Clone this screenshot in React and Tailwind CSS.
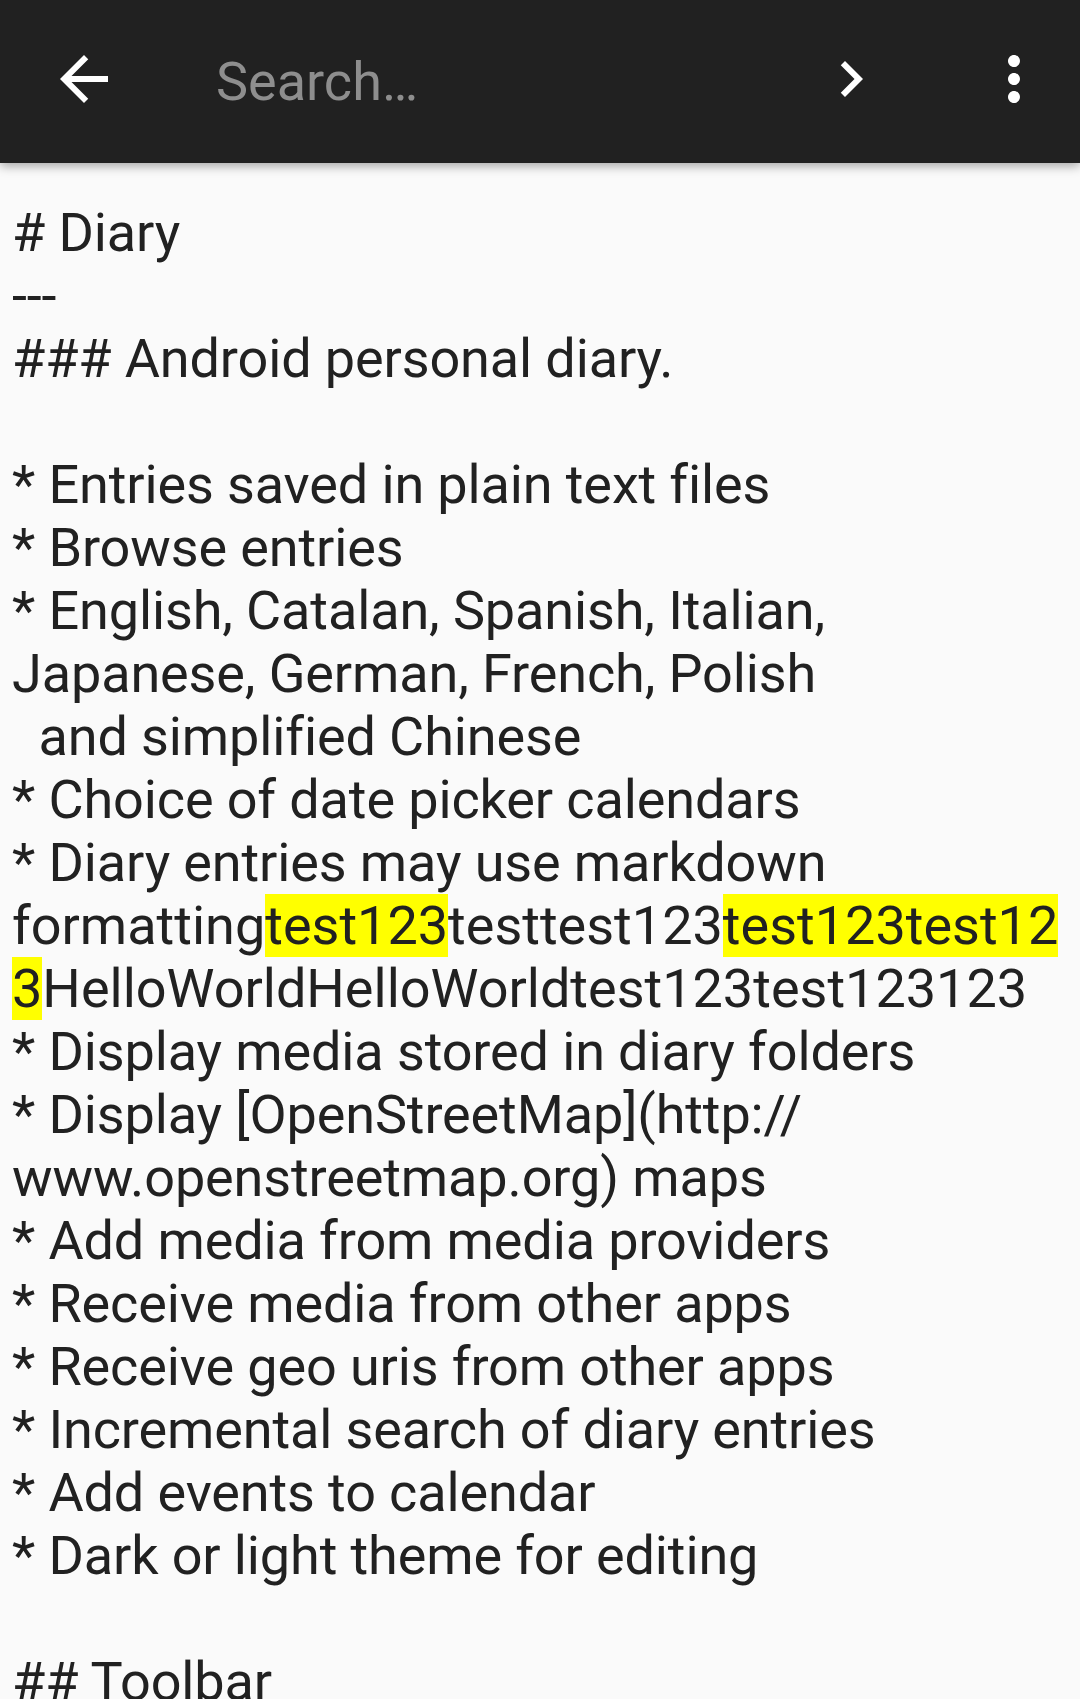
import React from 'react'

const lines = [
  '# Diary',
  '---',
  '### Android personal diary.',
  '',
  '* Entries saved in plain text files',
  '* Browse entries',
  '* English, Catalan, Spanish, Italian,',
  'Japanese, German, French, Polish',
  '  and simplified Chinese',
  '* Choice of date picker calendars',
  '* Diary entries may use markdown',
  'HL1',
  'HL2',
  '* Display media stored in diary folders',
  '* Display [OpenStreetMap](http://',
  'www.openstreetmap.org) maps',
  '* Add media from media providers',
  '* Receive media from other apps',
  '* Receive geo uris from other apps',
  '* Incremental search of diary entries',
  '* Add events to calendar',
  '* Dark or light theme for editing',
  '',
  '## Toolbar',
]

function Mark({ children }) {
  return <span className="bg-[#ffff00]">{children}</span>
}

function Line({ text }) {
  if (text === 'HL1') {
    return (
      <div className="h-[63px] whitespace-pre">
        formatting<Mark>test123</Mark>testtest123<Mark>test123test12</Mark>
      </div>
    )
  }
  if (text === 'HL2') {
    return (
      <div className="h-[63px] whitespace-pre">
        <Mark>3</Mark>HelloWorldHelloWorldtest123test123123
      </div>
    )
  }
  return <div className="h-[63px] whitespace-pre tracking-[-0.12px]">{text}</div>
}

export default function App() {
  return (
    <div className="h-[1699px] overflow-hidden bg-[#fafafa] font-['Roboto',sans-serif]">
      {/* search toolbar */}
      <header className="relative z-10 flex h-[163px] items-start bg-[#212121] pl-[48px] pr-[30px] shadow-[0_3px_10px_rgba(0,0,0,0.35)]">
        <svg viewBox="0 0 24 24" className="mt-[43px] h-[72px] w-[72px] fill-white">
          <path d="M20 11H7.83l5.59-5.59L12 4l-8 8 8 8 1.41-1.41L7.83 13H20v-2z" />
        </svg>
        <div className="ml-[96px] mt-[50px] flex-1 text-[54px] leading-[63px] text-[#8e8e8e]">Search…</div>
        <svg viewBox="0 0 24 24" className="mt-[43px] h-[72px] w-[72px] fill-white">
          <path d="M10 6L8.59 7.41 13.17 12l-4.58 4.59L10 18l6-6z" />
        </svg>
        <svg viewBox="0 0 24 24" className="ml-[91px] mt-[43px] h-[72px] w-[72px] fill-white">
          <path d="M12 8c1.1 0 2-.9 2-2s-.9-2-2-2-2 .9-2 2 .9 2 2 2zm0 2c-1.1 0-2 .9-2 2s.9 2 2 2 2-.9 2-2-.9-2-2-2zm0 6c-1.1 0-2 .9-2 2s.9 2 2 2 2-.9 2-2-.9-2-2-2z" />
        </svg>
      </header>

      {/* editor text */}
      <main className="pl-[12px] pt-[38px] text-[54px] leading-[63px] text-[#212121]">
        {lines.map((t, i) => (
          <Line key={i} text={t} />
        ))}
      </main>
    </div>
  )
}
